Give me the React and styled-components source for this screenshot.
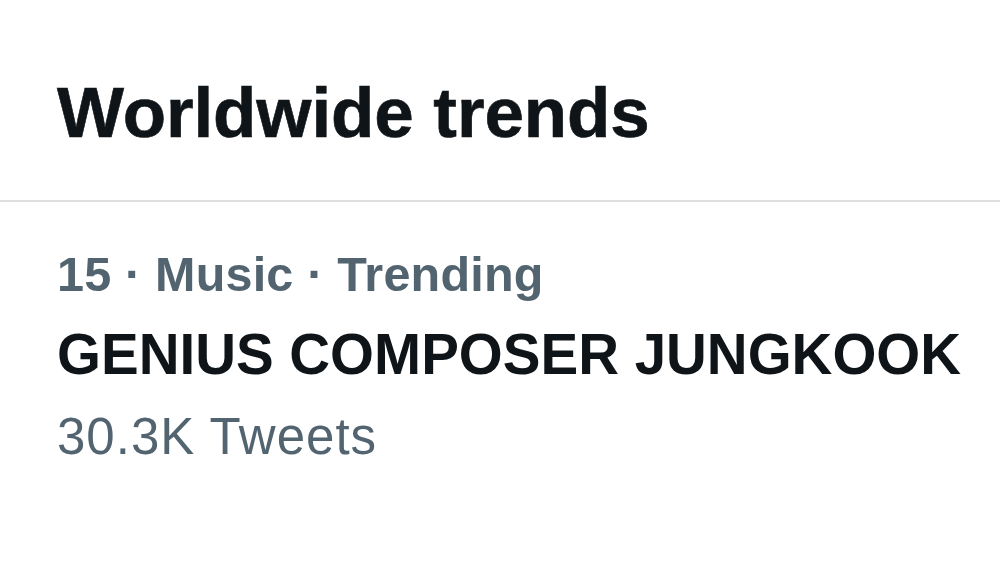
import React from 'react';
import styled, { createGlobalStyle } from 'styled-components';

const GlobalStyle = createGlobalStyle`
  html, body {
    margin: 0;
    padding: 0;
    background: #ffffff;
  }
  body {
    font-family: "Liberation Sans", Arial, sans-serif;
    -webkit-font-smoothing: antialiased;
  }
`;

const Panel = styled.section`
  width: 1000px;
  height: 563px;
  background: #ffffff;
  overflow: hidden;
`;

const Header = styled.header`
  padding: 73px 20px 0 57px;
  height: 202px;
  box-sizing: border-box;
  border-bottom: 2px solid #dedfe0;
`;

const Heading = styled.h2`
  margin: 0;
  font-size: 71px;
  line-height: 80px;
  font-weight: 700;
  color: #0f1419;
  letter-spacing: -0.1px;
  -webkit-text-stroke: 0.6px #0f1419;
`;

const Trend = styled.div`
  padding: 44px 20px 0 57px;
  display: flex;
  flex-direction: column;
  gap: 21px;
  white-space: nowrap;
`;

const Meta = styled.div`
  font-size: ${p => p.$size}px;
  line-height: ${p => p.$line}px;
  font-weight: ${p => (p.$bold ? 700 : 400)};
  letter-spacing: ${p => p.$track || 0}px;
  color: #536471;
`;

const Topic = styled.div`
  font-size: 56.5px;
  line-height: 64px;
  font-weight: 700;
  color: #0f1419;
`;

const App = () => {
  const trend = {
    rank: 15,
    category: 'Music',
    name: 'GENIUS COMPOSER JUNGKOOK',
    count: '30.3K',
  };

  return (
    <>
      <GlobalStyle />
      <Panel>
        <Header>
          <Heading>Worldwide trends</Heading>
        </Header>
        <Trend>
          <Meta $size={48.5} $line={56} $track={0.2} $bold>
            {trend.rank} · {trend.category} · Trending
          </Meta>
          <Topic>{trend.name}</Topic>
          <Meta $size={51} $line={58} $track={1}>
            {trend.count} Tweets
          </Meta>
        </Trend>
      </Panel>
    </>
  );
};

export default App;
